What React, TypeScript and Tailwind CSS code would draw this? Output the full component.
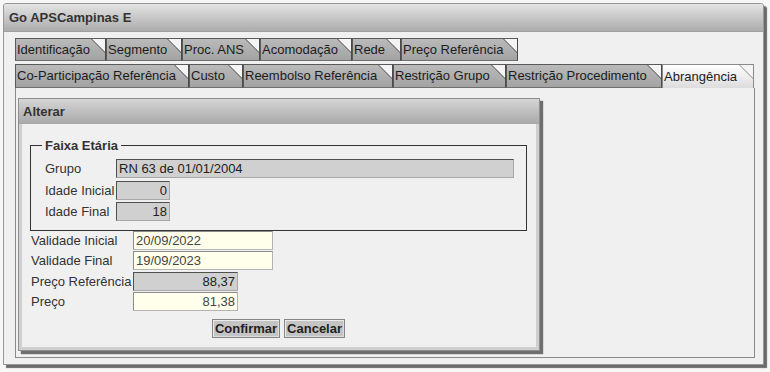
import React from "react";

type TabDef = { label: string; w: string; active?: boolean };

const row1: TabDef[] = [
  { label: "Identificação", w: "w-[91px]" },
  { label: "Segmento", w: "w-[76px]" },
  { label: "Proc. ANS", w: "w-[78px]" },
  { label: "Acomodação", w: "w-[92px]" },
  { label: "Rede", w: "w-[49px]" },
  { label: "Preço Referência", w: "w-[117px]" },
];

const row2: TabDef[] = [
  { label: "Co-Participação Referência", w: "w-[174px]" },
  { label: "Custo", w: "w-[54px]" },
  { label: "Reembolso Referência", w: "w-[150px]" },
  { label: "Restrição Grupo", w: "w-[113px]" },
  { label: "Restrição Procedimento", w: "w-[156px]" },
  { label: "Abrangência", w: "w-[92px]", active: true },
];

function Tab({ t, h }: { t: TabDef; h: string }) {
  const base = t.active
    ? "bg-gradient-to-b from-[#ffffff] to-[#dcdcdc] border-l border-t border-r border-[#8a8a8a]"
    : "bg-gradient-to-b from-[#bababa] to-[#a3a3a3] border-l border-t border-r border-b border-l-[#5a5a5a] border-t-[#5a5a5a] border-r-[#4a4a4a] border-b-[#707070]";
  return (
    <div className={`relative ${h} ${t.w} ${base} shrink-0 flex items-center pl-[1px] text-[13px] text-[#1c1c1c] whitespace-nowrap overflow-hidden`}>
      {t.label}
      <svg
        className="absolute -top-[1px] -right-[1px] w-[15px] h-[15px]"
        viewBox="0 0 15 15"
      >
        <polygon points="0,0 15,0 15,15" fill="#f4f4f4" />
        <line x1="0" y1="0.5" x2="14.5" y2="15" stroke={t.active ? "#8a8a8a" : "#555"} strokeWidth="1" />
      </svg>
    </div>
  );
}

function GrayInput({ w, value, right }: { w: string; value: string; right?: boolean }) {
  return (
    <div
      className={`${w} h-[19px] bg-[#d0d0d0] border border-t-[#505050] border-l-[#505050] border-b-[#a8a8a8] border-r-[#a8a8a8] flex items-center px-[2px] text-[13px] text-[#222] ${right ? "justify-end" : ""}`}
    >
      {value}
    </div>
  );
}

function YellowInput({ w, value, right }: { w: string; value: string; right?: boolean }) {
  return (
    <div
      className={`${w} h-[19px] bg-[#ffffeb] border border-t-[#8c8c8c] border-l-[#8c8c8c] border-b-[#b4b4b4] border-r-[#b4b4b4] flex items-center px-[2px] text-[13px] text-[#444] ${right ? "justify-end" : ""}`}
    >
      {value}
    </div>
  );
}

export default function App() {
  return (
    <div className="w-[770px] h-[372px] bg-[#f7f7f7] pt-[3px] pl-[3px] font-['Liberation_Sans',Arial,sans-serif] text-[13px] text-[#333]">
      <div className="w-[761px] h-[362px] border border-[#979797] rounded-t-[3px] bg-[#f0f0f0] shadow-[3px_3px_1px_#6a6a6a] flex flex-col">
        {/* header */}
        <div className="h-[28px] shrink-0 bg-gradient-to-b from-[#e4e4e4] to-[#acacac] border-b border-[#a0a0a0] flex items-center pl-[5px] font-bold text-[13px] text-[#333] rounded-t-[3px]">
          Go APSCampinas E
        </div>
        {/* body */}
        <div className="flex flex-col pl-[11px] pt-[6px]">
          <div className="flex">
            {row1.map((t) => (
              <Tab key={t.label} t={t} h="h-[23px]" />
            ))}
          </div>
          <div className="flex mt-[3px]">
            {row2.map((t) => (
              <Tab key={t.label} t={t} h="h-[24px]" />
            ))}
          </div>
          {/* tab content */}
          <div className="w-[740px] h-[270px] border-l border-r border-b border-[#8a8a8a] pl-[2px] pt-[10px]">
            {/* Alterar panel */}
            <div className="w-[522px] h-[253px] border border-[#8e8e8e] shadow-[3px_3px_1px_#6e6e6e] flex flex-col">
              <div className="h-[25px] shrink-0 bg-gradient-to-b from-[#d6d6d6] to-[#a8a8a8] flex items-center pl-[4px] font-bold text-[13px] text-[#333]">
                Alterar
              </div>
              <div className="flex-1 bg-[#f0f0f0] border-l-[3px] border-r-[3px] border-b-[3px] border-[#cfcfcf] pl-[8px] pt-[14px] flex flex-col">
                <fieldset className="w-[497px] border border-[#333] pb-[8px]">
                  <legend className="ml-[11px] px-[3px] font-bold text-[13px] leading-[15px] text-[#333]">
                    Faixa Etária
                  </legend>
                  <div className="flex flex-col gap-[2px] pt-[6px] pl-[14px]">
                    <div className="flex items-center">
                      <div className="w-[71px]">Grupo</div>
                      <GrayInput w="w-[398px]" value="RN 63 de 01/01/2004" />
                    </div>
                    <div className="flex items-center">
                      <div className="w-[71px]">Idade Inicial</div>
                      <GrayInput w="w-[54px]" value="0" right />
                    </div>
                    <div className="flex items-center">
                      <div className="w-[71px]">Idade Final</div>
                      <GrayInput w="w-[54px]" value="18" right />
                    </div>
                  </div>
                </fieldset>
                <div className="flex flex-col gap-[1px] pl-[1px]">
                  <div className="flex items-center">
                    <div className="w-[102px]">Validade Inicial</div>
                    <YellowInput w="w-[140px]" value="20/09/2022" />
                  </div>
                  <div className="flex items-center">
                    <div className="w-[102px]">Validade Final</div>
                    <YellowInput w="w-[140px]" value="19/09/2023" />
                  </div>
                  <div className="flex items-center">
                    <div className="w-[102px] whitespace-nowrap">Preço Referência</div>
                    <GrayInput w="w-[105px]" value="88,37" right />
                  </div>
                  <div className="flex items-center">
                    <div className="w-[102px]">Preço</div>
                    <YellowInput w="w-[105px]" value="81,38" right />
                  </div>
                </div>
                <div className="flex justify-center gap-[4px] mt-[7px] pr-[9px]">
                  <button className="h-[19px] px-[2px] bg-[#c4c4c4] border border-[#858585] shadow-[inset_1px_1px_0_#ececec,inset_-1px_-1px_0_#dcdcdc] font-bold text-[13px] text-[#222] leading-none">
                    Confirmar
                  </button>
                  <button className="h-[19px] px-[2px] bg-[#c4c4c4] border border-[#858585] shadow-[inset_1px_1px_0_#ececec,inset_-1px_-1px_0_#dcdcdc] font-bold text-[13px] text-[#222] leading-none">
                    Cancelar
                  </button>
                </div>
              </div>
            </div>
          </div>
        </div>
      </div>
    </div>
  );
}
